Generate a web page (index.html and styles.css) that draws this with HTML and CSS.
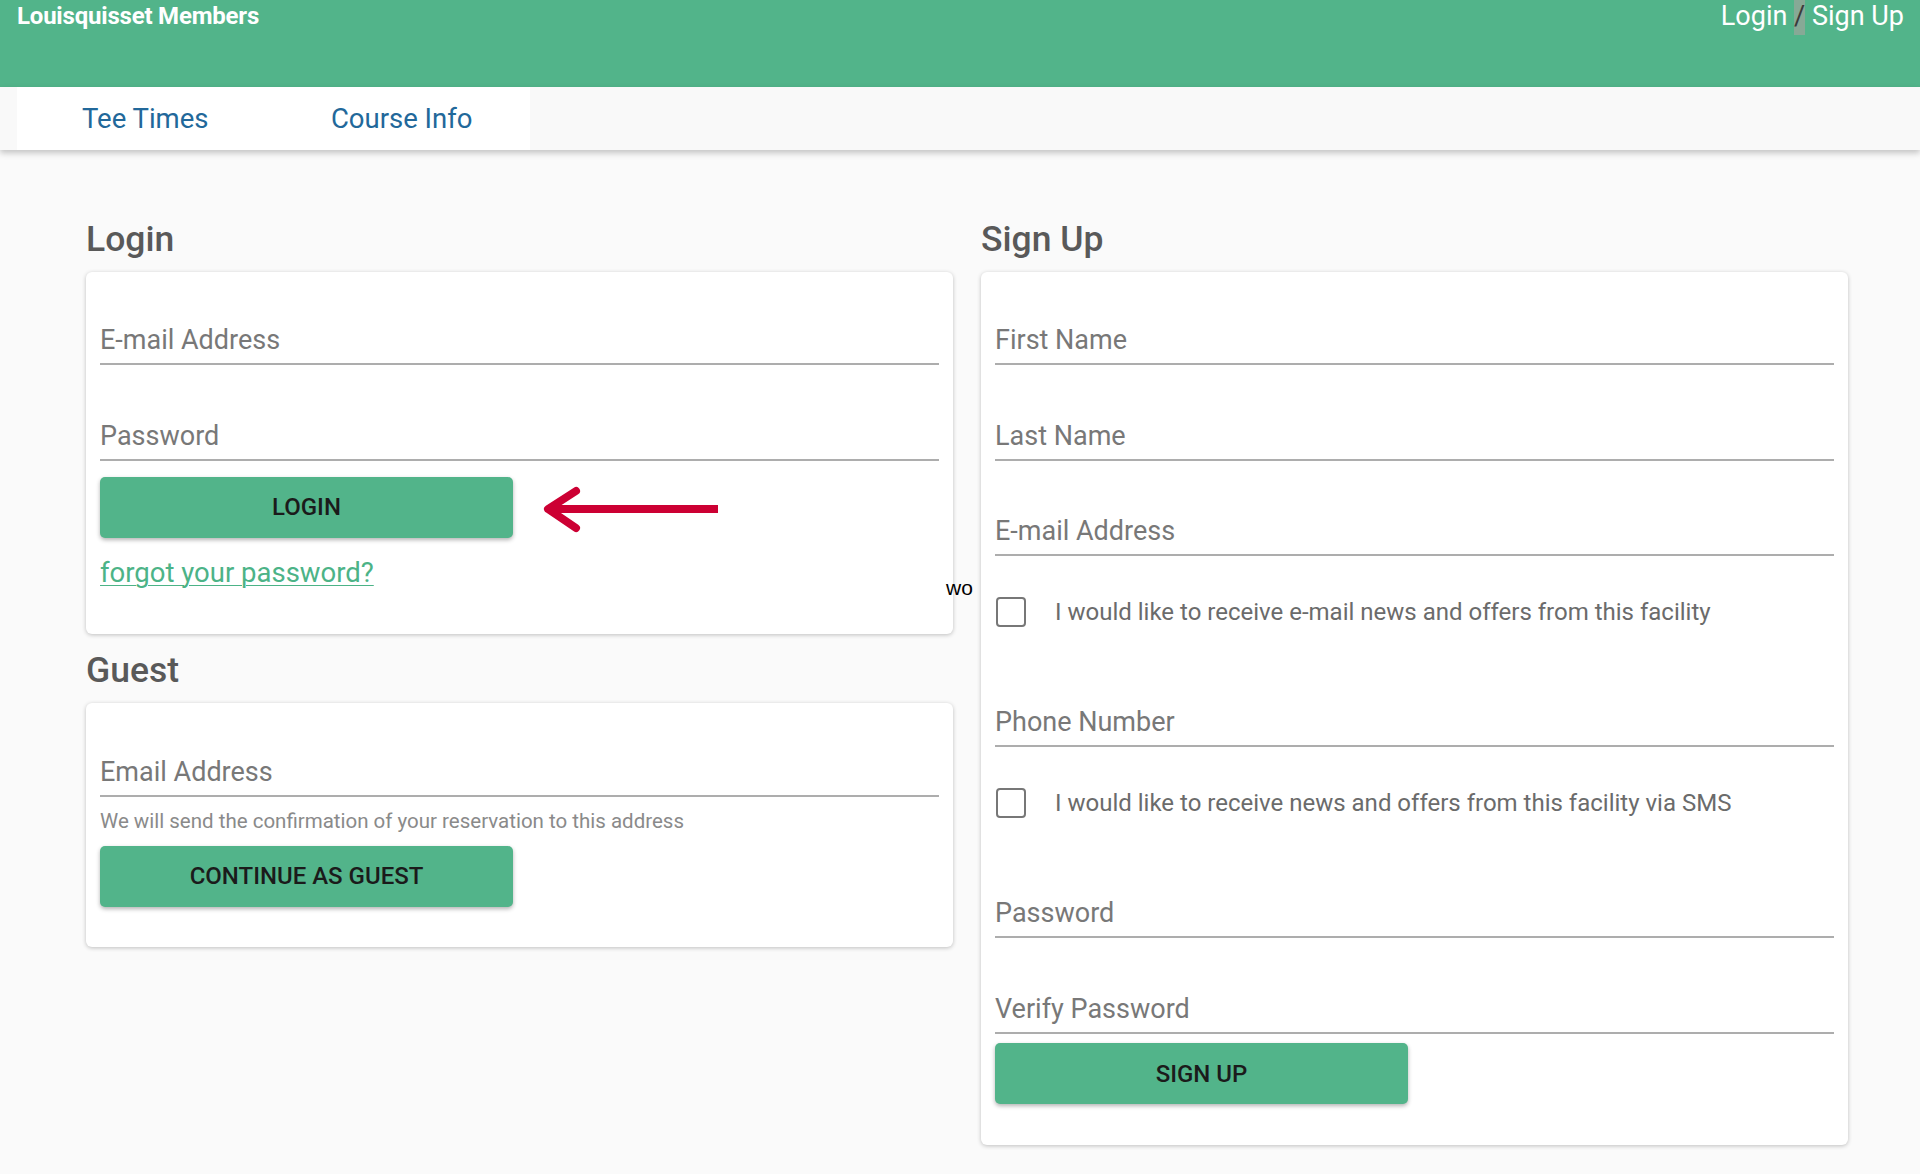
FILE: index.html
```html
<!DOCTYPE html>
<html lang="en">
<head>
    <meta charset="utf-8">
    <title>Louisquisset Members - Login</title>
    <link rel="stylesheet" href="styles.css">
</head>
<body>
<header class="topbar">
    <div class="brand">Louisquisset Members</div>
    <div class="account">
        <a href="#login">Login</a> <span class="sep">/</span> <a href="#signup">Sign Up</a>
    </div>
</header>

<nav class="tabs-bar">
    <ul class="tabs">
        <li><a href="#teetimes">Tee Times</a></li>
        <li><a href="#course">Course Info</a></li>
    </ul>
</nav>

<div class="page">
    <div class="col">
        <h2 class="title">Login</h2>
        <div class="card" id="login">
            <div class="field">
                <input type="email" placeholder="E-mail Address">
            </div>
            <div class="field">
                <input type="password" placeholder="Password">
            </div>
            <button type="button" class="btn btn-login">Login</button>
            <p class="forgot"><a href="#forgot">forgot your password?</a></p>

            <svg class="pointer" width="180" height="52" viewBox="0 0 180 52">
                <path d="M178 25 L8 25" stroke="#cc0033" stroke-width="8" fill="none"/>
                <path d="M36 7 L8 25 L36 44" stroke="#cc0033" stroke-width="8" fill="none"
                      stroke-linecap="round" stroke-linejoin="round"/>
            </svg>
            <span class="stray">wo</span>
        </div>

        <h2 class="title title-guest">Guest</h2>
        <div class="card card-guest">
            <div class="field">
                <input type="email" placeholder="Email Address">
            </div>
            <p class="hint">We will send the confirmation of your reservation to this address</p>
            <button type="button" class="btn btn-guest">Continue as guest</button>
        </div>
    </div>

    <div class="col">
        <h2 class="title">Sign Up</h2>
        <div class="card card-signup" id="signup">
            <div class="field">
                <input type="text" placeholder="First Name">
            </div>
            <div class="field">
                <input type="text" placeholder="Last Name">
            </div>
            <div class="field">
                <input type="email" placeholder="E-mail Address">
            </div>
            <label class="check">
                <span class="box"></span>
                <span>I would like to receive e-mail news and offers from this facility</span>
            </label>
            <div class="field field-after">
                <input type="tel" placeholder="Phone Number">
            </div>
            <label class="check">
                <span class="box"></span>
                <span>I would like to receive news and offers from this facility via SMS</span>
            </label>
            <div class="field field-after">
                <input type="password" placeholder="Password">
            </div>
            <div class="field">
                <input type="password" placeholder="Verify Password">
            </div>
            <button type="button" class="btn btn-signup">Sign up</button>
        </div>
    </div>
</div>
</body>
</html>
```

FILE: styles.css
```css
* {
    box-sizing: border-box;
}

body {
    margin: 0;
    background-color: #fafafa;
    font-family: Roboto, "Liberation Sans", sans-serif;
    min-height: 1174px;
}

a {
    text-decoration: none;
}

/* top green bar */
.topbar {
    height: 87px;
    padding: 0 16px 0 17px;
    background-color: #52b48a;
    display: flex;
    justify-content: space-between;
    align-items: flex-start;
    color: #fff;
}

.brand {
    font-size: 24px;
    font-weight: 700;
    line-height: 32px;
    letter-spacing: -0.2px;
}

.account {
    font-size: 27px;
    line-height: 32px;
}

.account a {
    color: #fff;
}

.sep {
    display: inline-block;
    padding-bottom: 3px;
    background-color: #87a996;
    color: #3a3a3a;
}

/* tabs */
.tabs-bar {
    height: 63px;
    padding-left: 17px;
    background-color: #f9f9f9;
    box-shadow: 0 3px 6px rgba(0, 0, 0, 0.22);
    position: relative;
}

.tabs {
    margin: 0;
    padding: 0;
    list-style: none;
    display: flex;
    width: 513px;
    height: 63px;
    background-color: #fff;
}

.tabs li {
    flex: 1;
    display: flex;
    align-items: center;
    justify-content: center;
}

.tabs a {
    font-size: 27.5px;
    color: #22689a;
}

/* columns */
.page {
    display: flex;
    gap: 28px;
    padding: 69px 0 0 86px;
}

.col {
    width: 867px;
}

.title {
    margin: 0 0 13px;
    font-size: 35.5px;
    line-height: 40px;
    font-weight: 500;
    color: #595959;
}

.title-guest {
    margin-top: 16px;
}

.card {
    position: relative;
    padding: 0 14px 46px;
    background-color: #fff;
    border-radius: 6px;
    box-shadow: 0 1px 4px rgba(0, 0, 0, 0.24);
}

.card-guest {
    padding-bottom: 40px;
}

.card-signup {
    padding-bottom: 41px;
}

.field {
    padding-top: 43.5px;
}

.field:first-child {
    padding-top: 41px;
}

.card-guest .field:first-child {
    padding-top: 42px;
}

.field-after {
    padding-top: 68px;
}

.field input {
    display: block;
    width: 100%;
    height: 52px;
    padding: 4px 0 0;
    border: 0;
    border-bottom: 2px solid #adadad;
    background: transparent;
    font-family: Roboto, "Liberation Sans", sans-serif;
    font-size: 27px;
    color: #333;
    outline: none;
}

.field input::placeholder {
    color: #787878;
}

.btn {
    display: block;
    width: 413px;
    height: 61px;
    margin-top: 16px;
    border: 0;
    border-radius: 5px;
    background-color: #52b48a;
    box-shadow: 0 2px 4px rgba(0, 0, 0, 0.3);
    font-family: Roboto, "Liberation Sans", sans-serif;
    font-size: 24px;
    font-weight: 500;
    color: #1b1b1b;
    text-transform: uppercase;
}

.btn-guest {
    margin-top: 14px;
}

.btn-signup {
    margin-top: 9.5px;
}

.forgot {
    margin: 20px 0 0;
    font-size: 27.5px;
    line-height: 30px;
}

.forgot a {
    color: #4cb387;
    text-decoration: underline;
    text-decoration-thickness: 1px;
    text-underline-offset: 3px;
}

.hint {
    margin: 13px 0 0;
    font-size: 20.5px;
    line-height: 22px;
    color: #8a8a8a;
}

.check {
    display: flex;
    align-items: center;
    gap: 29px;
    height: 30px;
    margin-top: 41px;
    padding-left: 1px;
    font-size: 24px;
    color: #6b6b6b;
}

.box {
    flex: none;
    width: 30px;
    height: 30px;
    border: 2.5px solid #777;
    border-radius: 4px;
}

/* annotation overlays */
.pointer {
    position: absolute;
    left: 454px;
    top: 212px;
}

.stray {
    position: absolute;
    left: 860px;
    top: 306px;
    font-family: "Liberation Sans", Arial, sans-serif;
    font-size: 21px;
    line-height: 20px;
    color: #000;
}
```
